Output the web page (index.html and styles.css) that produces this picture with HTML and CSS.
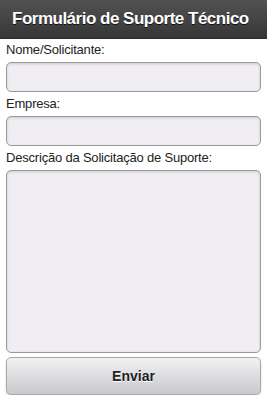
FILE: index.html
```html
<!DOCTYPE html>
<html lang="pt">
<head>
<meta charset="UTF-8" />
<meta name="viewport" content="width=device-width, initial-scale=1" />
<title>Formulário de Suporte Técnico</title>
<link rel="stylesheet" href="styles.css">
</head>
<body>

<div class="header">
  <h1>Formulário de Suporte Técnico</h1>
</div>

<form class="form" onsubmit="return false;">
  <label for="nome">Nome/Solicitante:</label>
  <input id="nome" type="text" class="field">

  <label for="empresa">Empresa:</label>
  <input id="empresa" type="text" class="field">

  <label for="descricao">Descrição da Solicitação de Suporte:</label>
  <textarea id="descricao" class="field area"></textarea>

  <button type="submit" class="send">Enviar</button>
</form>

</body>
</html>
```

FILE: styles.css
```css
body {
  margin: 0;
  font-family: "Liberation Sans", Arial, sans-serif;
  background: #fff;
  color: #222;
}

.header {
  height: 39px;
  background: linear-gradient(#525252, #363636);
  border-bottom: 1px solid #2a2a2a;
  box-sizing: border-box;
  display: flex;
  align-items: center;
  padding-left: 12px;
}
.header h1 {
  margin: 0;
  font-size: 17px;
  letter-spacing: -0.5px;
  font-weight: bold;
  color: #fff;
  text-shadow: 0 1px 0 #111;
  white-space: nowrap;
}

.form {
  display: flex;
  flex-direction: column;
  padding: 2px 6px 0;
}

.form label {
  font-size: 13px;
  letter-spacing: -0.2px;
  line-height: 17px;
  color: #222;
  margin-bottom: 4px;
}

.field {
  box-sizing: border-box;
  height: 30px;
  margin: 0 0 3px;
  border: 1px solid #9a9a9a;
  border-radius: 5px;
  background: #f1eef3;
  box-shadow: inset 0 1px 3px rgba(0, 0, 0, 0.15);
  font: inherit;
}

.area {
  height: 183px;
  resize: none;
  margin-bottom: 4px;
}

.send {
  height: 38px;
  border: 1px solid #a8a8a8;
  border-radius: 5px;
  background: linear-gradient(#f2f2f4, #c9c8cc);
  box-shadow: 0 1px 2px rgba(0, 0, 0, 0.2);
  font-family: inherit;
  font-size: 14px;
  font-weight: bold;
  color: #222;
  text-shadow: 0 1px 0 #fff;
}
```
